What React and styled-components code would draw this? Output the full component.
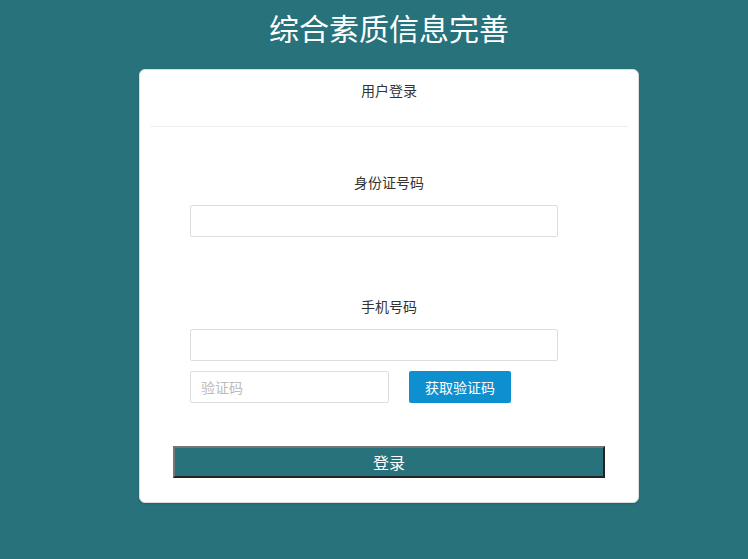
import styled, { createGlobalStyle } from "styled-components";

const GlobalStyle = createGlobalStyle`
  html, body {
    margin: 0;
    padding: 0;
    background: #27727b;
    font-family: "Noto Sans CJK SC", "Noto Sans", sans-serif;
  }
`;

const Page = styled.div`
  min-height: 559px;
  padding-left: 30px;
  display: flex;
  flex-direction: column;
  align-items: center;
`;

const Title = styled.h1`
  margin: 0 0 15px;
  height: 54px;
  line-height: 54px;
  font-size: 30px;
  font-weight: 400;
  color: #fff;
`;

const Card = styled.div`
  width: 500px;
  box-sizing: border-box;
  background: #fff;
  border: 1px solid #dcdcdc;
  border-radius: 6px;
  box-shadow: 0 1px 2px rgba(0, 0, 0, 0.15);
  padding-bottom: 24px;
`;

const CardHeader = styled.div`
  margin: 0 10px;
  height: 56px;
  line-height: 40px;
  text-align: center;
  font-size: 14px;
  color: #333;
  border-bottom: 1px solid #eee;
`;

const Form = styled.div`
  padding: 45px 0 0 50px;
  display: flex;
  flex-direction: column;
`;

const Label = styled.div`
  width: 398px;
  text-align: center;
  font-size: 14px;
  line-height: 20px;
  color: #333;
  margin-bottom: 13px;
  margin-top: ${(p) => (p.$gap ? "59px" : "0")};
`;

const Input = styled.input`
  box-sizing: border-box;
  width: ${(p) => p.$w || 368}px;
  height: 32px;
  border: 1px solid #ddd;
  border-radius: 2px;
  padding: 0 10px;
  font-size: 14px;
  font-family: inherit;
  color: #333;
  outline: none;

  &::placeholder {
    color: #bbb;
  }
`;

const CodeRow = styled.div`
  display: flex;
  gap: 20px;
  margin-top: 10px;
`;

const CodeButton = styled.button`
  width: 102px;
  height: 32px;
  border: none;
  border-radius: 2px;
  background: #0e8fd0;
  color: #fff;
  font-size: 14px;
  font-family: inherit;
  cursor: pointer;
`;

const LoginButton = styled.button`
  margin: 43px 0 0 33px;
  width: 432px;
  height: 32px;
  box-sizing: border-box;
  border: 2px solid;
  border-color: #767676 #222 #222 #767676;
  background: #27727b;
  color: #fff;
  font-size: 16px;
  font-family: inherit;
  cursor: pointer;
  padding: 0;
`;

export default function App() {
  return (
    <>
      <GlobalStyle />
      <Page>
        <Title>综合素质信息完善</Title>
        <Card>
          <CardHeader>用户登录</CardHeader>
          <Form>
            <Label>身份证号码</Label>
            <Input type="text" />
            <Label $gap>手机号码</Label>
            <Input type="text" />
            <CodeRow>
              <Input type="text" $w={199} placeholder="验证码" />
              <CodeButton>获取验证码</CodeButton>
            </CodeRow>
          </Form>
          <LoginButton>登录</LoginButton>
        </Card>
      </Page>
    </>
  );
}
